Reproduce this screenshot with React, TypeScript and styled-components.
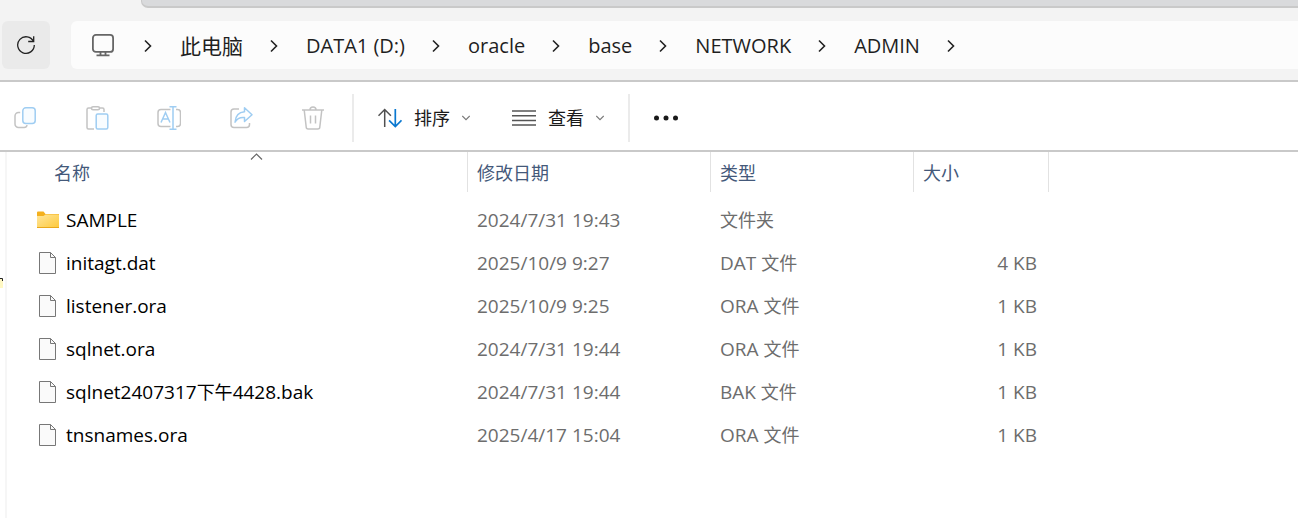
import React from "react";
import styled, { createGlobalStyle } from "styled-components";

const GlobalStyle = createGlobalStyle`
  * { box-sizing: border-box; }
  body {
    margin: 0;
    background: #ffffff;
    overflow: hidden;
    font-family: "Open Sans", "Noto Sans CJK SC", sans-serif;
  }
  button { font: inherit; color: inherit; border: 0; padding: 0; background: none; }
  svg { display: block; flex: none; }
`;

const Window = styled.div`
  display: flex;
  flex-direction: column;
  min-height: 100vh;
`;

const TitleStrip = styled.div`
  height: 8px;
  padding-left: 141px;
  background: #f3f3f3;
`;

const TitleStripFill = styled.div`
  height: 8px;
  background: #d9dadc;
  border-bottom: 2px solid #c9c9c9;
  border-left: 1px solid #c9c9c9;
  border-bottom-left-radius: 7px;
`;

const NavBar = styled.nav`
  display: flex;
  gap: 21px;
  padding: 13px 0 11px 2px;
  background: #f3f3f3;
  border-bottom: 2px solid #c9c9c9;
`;

const RefreshButton = styled.button`
  display: flex;
  align-items: center;
  justify-content: center;
  width: 48px;
  height: 48px;
  border-radius: 6px;
  background: #eaeaea;
`;

const AddressBar = styled.ol`
  flex: 1;
  display: flex;
  align-items: center;
  height: 48px;
  margin: 0;
  padding: 2px 0 0 20px;
  list-style: none;
  background: #fcfcfc;
  border-radius: 6px 0 0 6px;
  color: #1f1f1f;
  font-size: 20px;
  line-height: 28px;
`;

const Crumb = styled.li<{ $root?: boolean }>`
  display: flex;
  align-items: center;
  gap: ${(p) => (p.$root ? 28 : 26)}px;
  margin-right: 27px;
  white-space: nowrap;
`;

const CrumbLink = styled.a<{ $cjk?: boolean }>`
  color: inherit;
  text-decoration: none;
  font-size: ${(p) => (p.$cjk ? 21 : 20)}px;
`;

const Toolbar = styled.div`
  display: flex;
  align-items: center;
  height: 70px;
  padding-top: 4px;
  border-bottom: 2px solid #c9c9c9;
`;

const IconGroup = styled.div`
  display: flex;
  gap: 48px;
  padding: 0 27px 0 13px;
`;

const IconButton = styled.button`
  width: 24px;
  height: 24px;
`;

const Divider = styled.span`
  width: 2px;
  height: 48px;
  background: #ebebeb;
`;

const MenuGroup = styled.div`
  display: flex;
  gap: 42px;
  padding: 0 24px;
`;

const MenuButton = styled.button`
  display: flex;
  align-items: center;
  gap: 12px;
  color: #1a1a1a;
  font-size: 18px;
  line-height: 26px;
`;

const MoreButton = styled.button`
  margin-left: 23px;
`;

const Body = styled.main`
  flex: 1;
  display: flex;
`;

const SidePane = styled.aside`
  flex: none;
  width: 7px;
  padding-top: 124px;
  border-right: 2px solid #f6f6f6;
`;

const FileTable = styled.table`
  flex: 1;
  align-self: flex-start;
  width: 100%;
  table-layout: fixed;
  border-collapse: collapse;
  font-size: 19px;
  line-height: 26px;
`;

const Col = styled.col<{ $w?: number }>`
  width: ${(p) => (p.$w ? `${p.$w}px` : "auto")};
`;

const HeadCell = styled.th`
  padding: 0 0 6px;
  font-weight: 400;
  text-align: left;
`;

const HeadButton = styled.button<{ $indent?: boolean }>`
  position: relative;
  display: block;
  width: 100%;
  height: 40px;
  padding-top: 2px;
  padding-left: ${(p) => (p.$indent ? 47 : 9)}px;
  border-right: 1px solid #e2e2e2;
  color: #44597a;
  font-size: 18px;
  text-align: left;
`;

const SortMark = styled.span`
  position: absolute;
  top: 1px;
  left: 243px;
`;

const Cell = styled.td<{ $right?: boolean }>`
  height: 43px;
  padding: 0 ${(p) => (p.$right ? 12 : 0)}px 0 9px;
  color: #6d6d6d;
  text-align: ${(p) => (p.$right ? "right" : "left")};
  white-space: nowrap;
`;

const NameCell = styled.td`
  height: 43px;
  padding: 0 0 0 30px;
`;

const FileName = styled.div`
  display: flex;
  align-items: center;
  gap: 6px;
  color: #000000;
  white-space: nowrap;
`;

const FileIconSlot = styled.span`
  display: flex;
  width: 23px;
  padding-left: 2px;
`;

const Cjk = styled.span`
  font-size: 18px;
`;

const Chevron = () => (
  <svg width="10" height="14" viewBox="0 0 10 14" fill="none" stroke="#222" strokeWidth="1.6">
    <path d="M2 1.5 7.5 7 2 12.5" />
  </svg>
);

const MenuChevron = () => (
  <svg width="8" height="6" viewBox="0 0 8 6" fill="none" stroke="#777" strokeWidth="1.1">
    <path d="M0.3 1 4 4.7 7.7 1" />
  </svg>
);

const RefreshIcon = () => (
  <svg width="20" height="20" viewBox="0 0 20 20" fill="none" stroke="#222" strokeWidth="1.3">
    <path d="M17.5 6.5A8.3 8.3 0 1 0 18.3 10" />
    <path d="M17.7 1.2v5.3h-5.5" />
  </svg>
);

const ComputerIcon = () => (
  <svg width="24" height="26" viewBox="0 0 24 26" fill="none" stroke="#666" strokeWidth="1.8">
    <rect x="1.9" y="1.9" width="20.2" height="17" rx="3" />
    <path d="M9.5 19v3.4M14.5 19v3.4M5.5 22.4h13" />
  </svg>
);

const GREY = "#c3c3c3";
const BLUE = "#9fcdf2";

const CopyIcon = () => (
  <svg width="24" height="24" viewBox="0 0 24 24" fill="none" strokeWidth="1.5">
    <path d="M7.2 6.5H5.5A3.5 3.5 0 0 0 2 10v8a3.5 3.5 0 0 0 3.5 3.5h5.6a3 3 0 0 0 3-2.3" stroke={GREY} />
    <rect x="9.8" y="1.8" width="12.4" height="15.6" rx="3" stroke={BLUE} fill="#f8fcff" />
  </svg>
);

const PasteIcon = () => (
  <svg width="24" height="24" viewBox="0 0 24 24" fill="none" strokeWidth="1.5">
    <path d="M6 2H3.5A1.5 1.5 0 0 0 2 3.5v18A1.5 1.5 0 0 0 3.5 23H9M15 2h2.5A1.5 1.5 0 0 1 19 3.5V6" stroke={GREY} />
    <rect x="6.5" y="0.8" width="8" height="3" rx="1.5" stroke={GREY} />
    <rect x="11.2" y="8" width="11.6" height="15" rx="1.5" stroke={BLUE} fill="#f8fcff" />
  </svg>
);

const RenameIcon = () => (
  <svg width="24" height="24" viewBox="0 0 24 24" fill="none" strokeWidth="1.5">
    <path d="M13.5 3.5H4A3 3 0 0 0 1 6.5v11a3 3 0 0 0 3 3h9.5M19 3.5h1.5a3 3 0 0 1 3 3v11a3 3 0 0 1-3 3H19" stroke={GREY} />
    <path d="M4 16.5 8.5 6.5l4.5 10M5.7 13h5.7M12.5 0.8h7M12.5 23.2h7M16 0.8v22.4" stroke={BLUE} />
  </svg>
);

const ShareIcon = () => (
  <svg width="24" height="24" viewBox="0 0 24 24" fill="none" strokeWidth="1.5" strokeLinejoin="round">
    <path d="M10 3H5a3 3 0 0 0-3 3v12.500a3 3 0 0 0 3 3h12.500a3 3 0 0 0 3-3V17" stroke={GREY} />
    <path d="M15.500 1.800 23 8.700l-7.500 6.800v-4C11 11 8 12.500 6 16.200 6.500 10 9.500 6.200 15.500 5.800Z" stroke={BLUE} />
  </svg>
);

const TrashIcon = () => (
  <svg width="24" height="24" viewBox="0 0 24 24" fill="none" stroke={GREY} strokeWidth="1.5">
    <path d="M1 4h22M9 4a3 3 0 0 1 6 0M3.200 4l2 17a2 2 0 0 0 2 2h9.600a2 2 0 0 0 2-2l2-17M9.500 9.500v8M14.500 9.500v8" />
  </svg>
);

const SortIcon = () => (
  <svg width="24" height="24" viewBox="0 0 24 24" fill="none" strokeWidth="1.5">
    <path d="M6.700 21V3.500M0.500 9.700 6.700 3.500l6.200 6.200" stroke="#505050" />
    <path d="M17.300 3v17.500M11.100 14.300l6.200 6.200 6.200-6.200" stroke="#0a78d0" strokeWidth="1.7" />
  </svg>
);

const ListIcon = () => (
  <svg width="24" height="24" viewBox="0 0 24 24" stroke="#555" strokeWidth="1.5">
    <path d="M0 5h24M0 9.700h24M0 14.400h24M0 19.100h24" />
  </svg>
);

const DotsIcon = () => (
  <svg width="26" height="8" viewBox="0 0 26 8" fill="#1a1a1a">
    <circle cx="3.500" cy="4" r="2.500" />
    <circle cx="13" cy="4" r="2.500" />
    <circle cx="22.500" cy="4" r="2.500" />
  </svg>
);

const FolderIcon = () => (
  <svg width="23" height="18" viewBox="0 0 23 18">
    <defs>
      <linearGradient id="folder" x1="0" y1="0" x2="1" y2="1">
        <stop offset="0" stopColor="#ffe69c" />
        <stop offset="1" stopColor="#fdc93b" />
      </linearGradient>
    </defs>
    <path d="M0 1.500A1 1 0 0 1 1 .5h5.500L8.500 3H22v5H0Z" fill="#f4b01e" />
    <path d="M0 5h6.500l2-1.500H21.500a.5.500 0 0 1 .5.500V17H0Z" fill="url(#folder)" />
    <path d="M0 16.500h22" stroke="#e9a81c" />
  </svg>
);

const FileIcon = () => (
  <svg width="17" height="22" viewBox="0 0 17 22" fill="none" stroke="#777">
    <path d="M.5.500h11l5 5v16H.5Z" fill="#fafafa" />
    <path d="M11.500.500v5h5" />
  </svg>
);

const SortMarkIcon = () => (
  <svg width="13" height="8" viewBox="0 0 13 8" fill="none" stroke="#666" strokeWidth="1.2">
    <path d="M1 6.500 6.500 1 12 6.500" />
  </svg>
);

const PaneHint = () => (
  <svg width="4" height="12" viewBox="0 0 4 12">
    <path d="M0 3h3v9H0Z" fill="#fff8c4" />
    <path d="M0 2.500h2.500V5" fill="none" stroke="#222" />
  </svg>
);

const crumbs = ["此电脑", "DATA1 (D:)", "oracle", "base", "NETWORK", "ADMIN"];

const actions = [
  { label: "复制", Icon: CopyIcon },
  { label: "粘贴", Icon: PasteIcon },
  { label: "重命名", Icon: RenameIcon },
  { label: "共享", Icon: ShareIcon },
  { label: "删除", Icon: TrashIcon },
];

const files = [
  { name: "SAMPLE", date: "2024/7/31 19:43", type: "文件夹", size: "", folder: true },
  { name: "initagt.dat", date: "2025/10/9 9:27", type: "DAT 文件", size: "4 KB" },
  { name: "listener.ora", date: "2025/10/9 9:25", type: "ORA 文件", size: "1 KB" },
  { name: "sqlnet.ora", date: "2024/7/31 19:44", type: "ORA 文件", size: "1 KB" },
  { name: "sqlnet2407317下午4428.bak", date: "2024/7/31 19:44", type: "BAK 文件", size: "1 KB" },
  { name: "tnsnames.ora", date: "2025/4/17 15:04", type: "ORA 文件", size: "1 KB" },
];

const isCjk = (s: string) => /^[\u4e00-\u9fff]+$/.test(s);

const Mixed = ({ text }: { text: string }) => (
  <span>
    {text.split(/([\u4e00-\u9fff]+)/).map((part, i) => (isCjk(part) ? <Cjk key={i}>{part}</Cjk> : part))}
  </span>
);

export default function App() {
  return (
    <Window>
      <GlobalStyle />
      <TitleStrip>
        <TitleStripFill />
      </TitleStrip>
      <NavBar>
        <RefreshButton aria-label="刷新">
          <RefreshIcon />
        </RefreshButton>
        <AddressBar>
          <Crumb $root>
            <ComputerIcon />
            <Chevron />
          </Crumb>
          {crumbs.map((c) => (
            <Crumb key={c}>
              <CrumbLink href="#" $cjk={isCjk(c)}>{c}</CrumbLink>
              <Chevron />
            </Crumb>
          ))}
        </AddressBar>
      </NavBar>
      <Toolbar>
        <IconGroup>
          {actions.map(({ label, Icon }) => (
            <IconButton key={label} aria-label={label} disabled>
              <Icon />
            </IconButton>
          ))}
        </IconGroup>
        <Divider />
        <MenuGroup>
          <MenuButton>
            <SortIcon />
            排序
            <MenuChevron />
          </MenuButton>
          <MenuButton>
            <ListIcon />
            查看
            <MenuChevron />
          </MenuButton>
        </MenuGroup>
        <Divider />
        <MoreButton aria-label="更多">
          <DotsIcon />
        </MoreButton>
      </Toolbar>
      <Body>
        <SidePane>
          <PaneHint />
        </SidePane>
        <FileTable>
          <colgroup>
            <Col $w={461} />
            <Col $w={243} />
            <Col $w={203} />
            <Col $w={135} />
            <Col />
          </colgroup>
          <thead>
            <tr>
              <HeadCell aria-sort="ascending">
                <HeadButton $indent>
                  名称
                  <SortMark>
                    <SortMarkIcon />
                  </SortMark>
                </HeadButton>
              </HeadCell>
              <HeadCell><HeadButton>修改日期</HeadButton></HeadCell>
              <HeadCell><HeadButton>类型</HeadButton></HeadCell>
              <HeadCell><HeadButton>大小</HeadButton></HeadCell>
              <td />
            </tr>
          </thead>
          <tbody>
            {files.map((f) => (
              <tr key={f.name}>
                <NameCell>
                  <FileName>
                    {f.folder ? <FolderIcon /> : <FileIconSlot><FileIcon /></FileIconSlot>}
                    <Mixed text={f.name} />
                  </FileName>
                </NameCell>
                <Cell>{f.date}</Cell>
                <Cell><Mixed text={f.type} /></Cell>
                <Cell $right>{f.size}</Cell>
                <td />
              </tr>
            ))}
          </tbody>
        </FileTable>
      </Body>
    </Window>
  );
}
